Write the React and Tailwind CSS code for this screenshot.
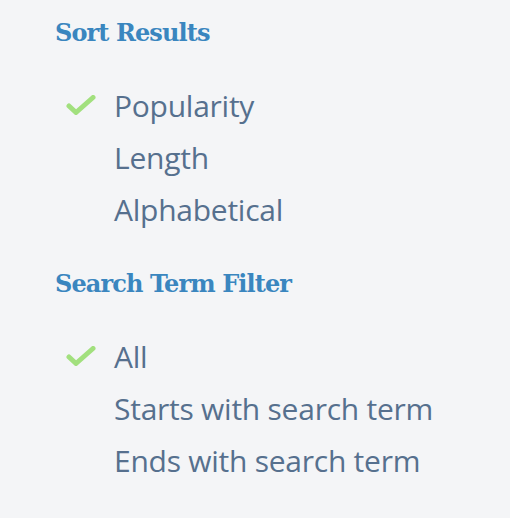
import React from 'react';

const Check = () => (
  <svg width="30" height="20" viewBox="0 0 30 20" className="shrink-0">
    <path d="M3 11 L10 17.5 L27 2.5" fill="none" stroke="#a2e07e" strokeWidth="5" strokeLinecap="round" strokeLinejoin="round" />
  </svg>
);

const Section = ({ title, items, selected }) => (
  <div>
    <h2 className="text-[24px] font-bold text-[#3a86bf] leading-[30px] font-['DejaVu_Serif',serif] tracking-[-0.9px]">{title}</h2>
    <ul className="mt-[31px] flex flex-col">
      {items.map((item) => (
        <li key={item} className="flex items-center h-[52px]">
          <div className="w-[59px] flex pl-[11px]">
            {item === selected && <Check />}
          </div>
          <span className="text-[30px] tracking-[-0.25px] text-[#56708e] font-['Open_Sans',sans-serif]">{item}</span>
        </li>
      ))}
    </ul>
  </div>
);

export default function App() {
  return (
    <div className="w-[510px] h-[518px] bg-[#f4f5f7] pl-[55px] pt-[18px] flex flex-col gap-[34px]">
      <Section title="Sort Results" items={['Popularity', 'Length', 'Alphabetical']} selected="Popularity" />
      <Section title="Search Term Filter" items={['All', 'Starts with search term', 'Ends with search term']} selected="All" />
    </div>
  );
}
